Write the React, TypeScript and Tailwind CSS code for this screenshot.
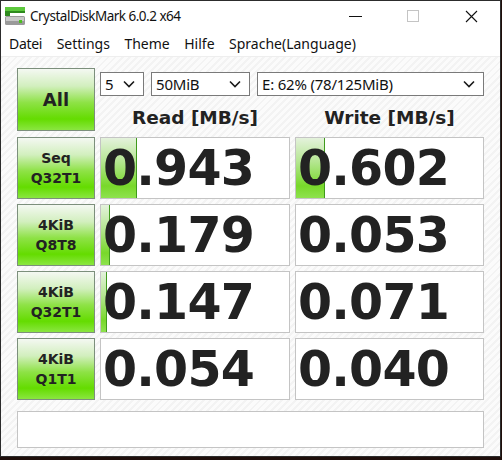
const rows = [
  { l1: "Seq", l2: "Q32T1", read: "0.943", write: "0.602", rb: 36, wb: 29 },
  { l1: "4KiB", l2: "Q8T8", read: "0.179", write: "0.053", rb: 9, wb: 0 },
  { l1: "4KiB", l2: "Q32T1", read: "0.147", write: "0.071", rb: 6, wb: 0 },
  { l1: "4KiB", l2: "Q1T1", read: "0.054", write: "0.040", rb: 0, wb: 0 },
];

function Chevron() {
  return (
    <svg width="12" height="8" viewBox="0 0 12 8" className="shrink-0">
      <polyline points="1,1.5 6,6.5 11,1.5" fill="none" stroke="#1a1a1a" strokeWidth="1.6" />
    </svg>
  );
}

function Select({ label, className }: { label: string; className: string }) {
  return (
    <div
      className={`flex h-[24px] items-center justify-between border border-[#7a7a7a] bg-white pl-[4px] pr-[8px] text-[15px] tracking-[-0.2px] text-[#111] ${className}`}
    >
      <span>{label}</span>
      <Chevron />
    </div>
  );
}

function GreenButton({ children, className }: { children: React.ReactNode; className: string }) {
  return (
    <div
      className={`flex flex-col items-center justify-center border border-[#7c8f7c] bg-[linear-gradient(to_bottom,#f4f8f2_0%,#d2efbe_28%,#8ee246_55%,#64dc00_82%,#8ae640_100%)] font-bold text-[#222] [font-family:'DejaVu_Sans',sans-serif] ${className}`}
    >
      {children}
    </div>
  );
}

function Value({ value, bar }: { value: string; bar: number }) {
  return (
    <div className="relative flex h-[62px] items-center overflow-hidden border border-[#c4c4c4] bg-white pl-[2px]">
      {bar > 0 && (
        <div
          className="absolute bottom-0 left-0 top-0 border-r border-[#3f9a1c] bg-[linear-gradient(to_bottom,#e4f2dc_0%,#b4e690_40%,#78d82a_80%,#8ee24e_100%)]"
          style={{ width: bar }}
        />
      )}
      <span className="relative text-[49px] font-bold leading-none tracking-[-0.8px] text-[#222] [font-family:'DejaVu_Sans',sans-serif]">
        {value}
      </span>
    </div>
  );
}

export default function App() {
  return (
    <div className="h-[460px] w-[502px] bg-[#1e0e0a]">
      <div className="flex h-[457px] w-[501px] flex-col border border-[#2c2c2c] bg-white [font-family:'Noto_Sans',sans-serif]">
        <div className="flex h-[30px] items-center">
          <svg width="22" height="22" viewBox="0 0 22 22" className="ml-[3px]">
            <rect x="1" y="2" width="20" height="5" fill="#5cc83c" />
            <rect x="1" y="6" width="20" height="2" fill="#2e8a1e" />
            <rect x="1" y="8" width="5" height="3" fill="#2e8a1e" />
            <rect x="1" y="11" width="20" height="9" rx="1.5" fill="#9a9a9a" />
            <rect x="2" y="12" width="18" height="4" fill="#c8c8c8" />
            <rect x="15" y="15" width="3" height="3" fill="#4cc020" />
          </svg>
          <span className="ml-[4px] text-[13.5px] tracking-[-0.5px] text-[#111]">CrystalDiskMark 6.0.2 x64</span>
          <div className="ml-auto flex items-center">
            <div className="mr-[45px] h-[1px] w-[13px] bg-[#111]" />
            <div className="mr-[46px] h-[12px] w-[12px] border border-[#c4c4c4]" />
            <svg width="13" height="13" viewBox="0 0 13 13" className="mr-[22px]">
              <path d="M1 1 L12 12 M12 1 L1 12" stroke="#111" strokeWidth="1.1" />
            </svg>
          </div>
        </div>
        <div className="flex h-[25px] items-center gap-[14.5px] pl-[8px] text-[14px] text-[#111]">
          <span className="tracking-[-0.3px]">Datei</span>
          <span>Settings</span>
          <span>Theme</span>
          <span>Hilfe</span>
          <span>Sprache(Language)</span>
        </div>
        <div className="flex flex-1 flex-col border-t border-[#eeeeee] bg-[repeating-linear-gradient(135deg,#f3f3f3_0px,#f3f3f3_2px,#fbfbfb_2px,#fbfbfb_5px)] px-[16px] pt-[11px]">
          <div className="grid grid-cols-[78px_190px_189px] gap-x-[5px] gap-y-[5px]">
            <GreenButton className="h-[63px] text-[18px]">All</GreenButton>
            <div className="col-span-2 flex flex-col">
              <div className="mt-[4px] flex gap-[7px]">
                <Select label="5" className="w-[44px]" />
                <Select label="50MiB" className="w-[99px]" />
                <Select label="E: 62% (78/125MiB)" className="w-[227px]" />
              </div>
              <div className="mt-[13px] grid grid-cols-[190px_189px] gap-x-[5px] text-[18.5px] font-bold leading-none text-[#222] [font-family:'DejaVu_Sans',sans-serif]">
                <span className="text-center">Read [MB/s]</span>
                <span className="text-center">Write [MB/s]</span>
              </div>
            </div>
            {rows.map((r, i) => (
              <div key={i} className={`col-span-3 grid grid-cols-[78px_190px_189px] gap-x-[5px] ${i === 0 ? "mt-[1px]" : ""}`}>
                <GreenButton className="h-[62px] text-[14px] leading-[20px]">
                  <span>{r.l1}</span>
                  <span>{r.l2}</span>
                </GreenButton>
                <Value value={r.read} bar={r.rb} />
                <Value value={r.write} bar={r.wb} />
              </div>
            ))}
          </div>
          <div className="mt-[11px] h-[37px] w-[467px] border border-[#c4c4c4] bg-white" />
        </div>
      </div>
    </div>
  );
}
